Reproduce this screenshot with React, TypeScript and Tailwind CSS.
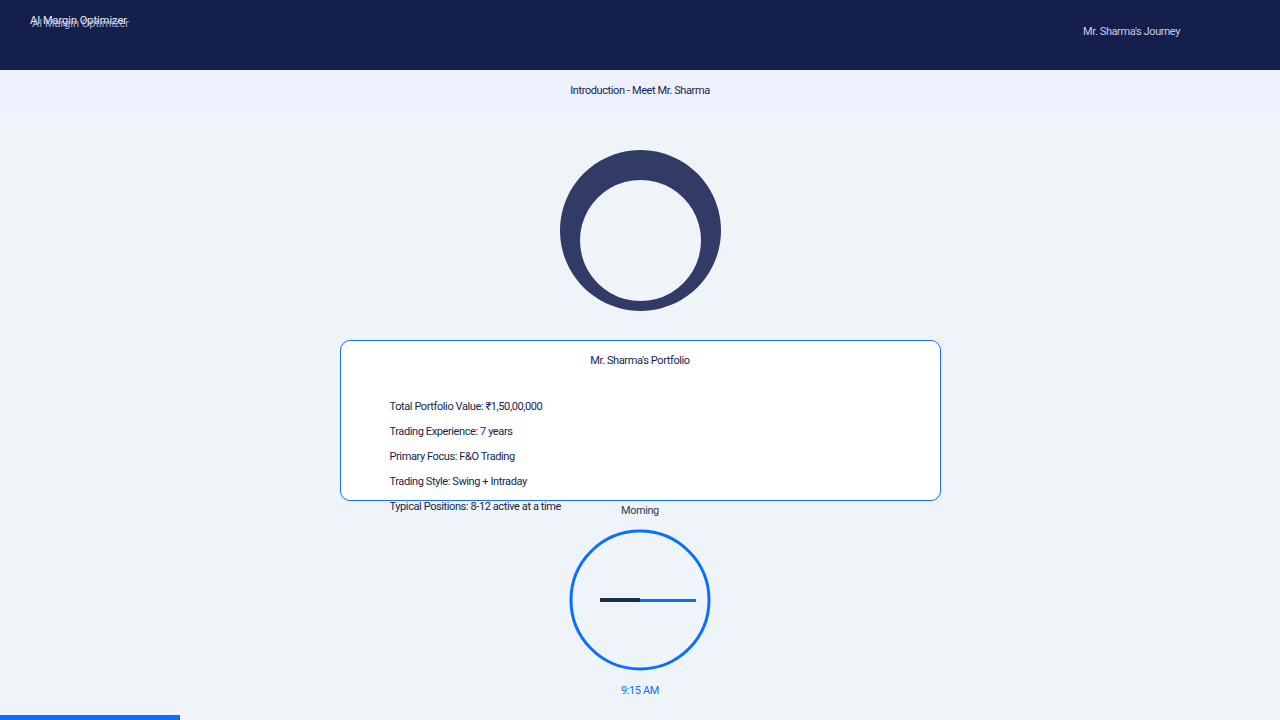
import React from "react";

const items = [
  "Total Portfolio Value: ₹1,50,00,000",
  "Trading Experience: 7 years",
  "Primary Focus: F&O Trading",
  "Trading Style: Swing + Intraday",
  "Typical Positions: 8-12 active at a time",
];

export default function App() {
  return (
    <div className="relative w-[1280px] h-[720px] overflow-hidden bg-[#eff4f9] text-[11px] tracking-[-0.4px] text-[#151f4b]" style={{ fontFamily: "Roboto, 'Noto Sans', sans-serif" }}>
      <header className="h-[70px] bg-[#151f4b] flex justify-between px-[30px]">
        <div className="relative pt-[13px] text-[#e8eaf2] whitespace-nowrap tracking-[0px]">
          <span className="block">AI Margin Optimizer</span>
          <span className="absolute left-[2px] top-[16px] text-[#c9cde0] opacity-80 whitespace-nowrap">AI Margin Optimizer</span>
        </div>
        <div className="pt-[24px] pr-[70px] text-[#c9cde8] whitespace-nowrap">Mr. Sharma's Journey</div>
      </header>
      <nav className="h-[40px] bg-[#eff0fd] flex items-center justify-center pt-[2px]">Introduction - Meet Mr. Sharma</nav>
      <main className="flex flex-col items-center">
        <div className="mt-[40px] h-[161px] w-[161px]">
          <svg width="161" height="161" viewBox="0 0 161 161">
            <path fillRule="evenodd" fill="#323a66" d="M80.5 0 A80.5 80.5 0 1 1 80.49 0 Z M80.5 30 A60.5 60.5 0 1 0 80.51 30 Z" />
          </svg>
        </div>
        <div className="mt-[29px] w-[601px] h-[161px] bg-white border border-[#1a6ff5] rounded-[10px] relative">
          <div className="text-center pt-[12px]">Mr. Sharma's Portfolio</div>
          <ul className="pl-[49px] pt-[28px] flex flex-col gap-[8px]">
            {items.map((t) => (
              <li key={t} className="h-[17px] leading-[17px] whitespace-nowrap">{t}</li>
            ))}
          </ul>
        </div>
        <div className="mt-[1px] leading-[17px] text-[#333a55]">Morning</div>
        <svg className="mt-[10px]" width="142" height="142" viewBox="0 0 142 142">
          <circle cx="71" cy="71" r="69" fill="none" stroke="#0d6efd" strokeWidth="3" />
          <line x1="31" y1="71" x2="71" y2="71" stroke="#1e2e45" strokeWidth="4" />
          <line x1="71" y1="71.5" x2="127" y2="71.5" stroke="#0d6efd" strokeWidth="3" />
        </svg>
        <div className="mt-[12px] text-[#0d6efd]">9:15 AM</div>
      </main>
      <div className="absolute left-0 bottom-0 h-[5px] w-[180px] bg-[#0d6efd]" />
    </div>
  );
}
